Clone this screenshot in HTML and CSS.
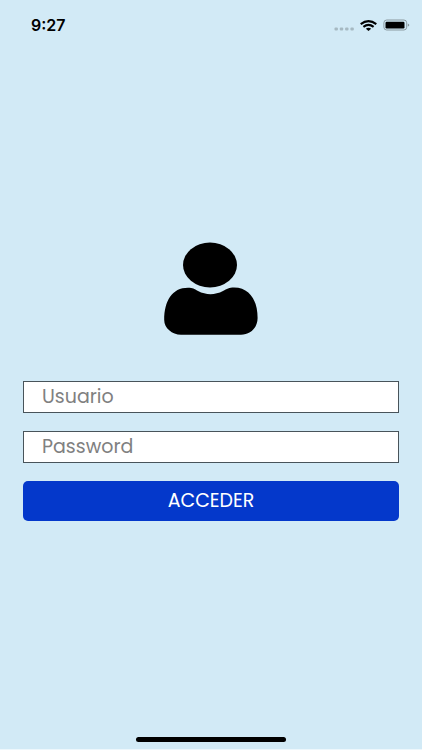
FILE: index.html
```html
<!DOCTYPE html>
<html lang="es">
<head>
<meta charset="utf-8">
<meta name="viewport" content="width=device-width, initial-scale=1">
<title>Acceder</title>
<link rel="stylesheet" href="styles.css">
</head>
<body>
<header class="status">
  <time class="clock">9:27</time>
  <div class="indicators">
    <svg class="signal" width="20" height="4" viewBox="0 0 20 4" aria-hidden="true">
      <rect x="0.5" y="0.5" width="3.4" height="3" rx="1"/><rect x="5.8" y="0.5" width="3.4" height="3" rx="1"/><rect x="11.1" y="0.5" width="3.4" height="3" rx="1"/><rect x="16.4" y="0.5" width="3.4" height="3" rx="1"/>
    </svg>
    <svg class="wifi" width="17" height="11" viewBox="0 0 17 11" aria-hidden="true">
      <path d="M0.7 4.1Q8.5-1.8 16.3 4.1M3.4 6.8Q8.5 2.9 13.6 6.8" fill="none" stroke="#000" stroke-width="2.1"/>
      <path d="M5.8 8.8Q8.5 6.6 11.2 8.8L8.5 10.9Z"/>
    </svg>
    <svg class="battery" width="27" height="12" viewBox="0 0 27 12" aria-hidden="true">
      <rect x="0.9" y="1" width="22.8" height="10" rx="2.8" fill="none" stroke="#8a999f"/>
      <rect x="2.5" y="2.7" width="19" height="6.8" rx="1.2"/>
      <path d="M24.8 4.4Q26.3 5 26.3 6T24.8 7.6Z" fill="#8a999f"/>
    </svg>
  </div>
</header>
<main class="login">
  <svg class="avatar" width="94" height="93" viewBox="0 0 94 93" aria-hidden="true">
    <ellipse cx="46" cy="23" rx="27" ry="22.4"/>
    <path d="M24 45.8C29 45.8 30 46.7 34 49C42 53.2 51 53.2 59 49C63 46.7 65 45.4 70 45.4C86 45.4 93.6 59 93.6 76C93.6 86 86 92.7 77 92.7H17C8 92.7 0.2 86 0.2 78C0.2 59 8 45.8 24 45.8Z"/>
  </svg>
  <form class="form">
    <input class="field" type="text" placeholder="Usuario" aria-label="Usuario">
    <input class="field" type="password" placeholder="Password" aria-label="Password">
    <button class="submit" type="submit">ACCEDER</button>
  </form>
</main>
<footer class="home"><div class="home-bar"></div></footer>
</body>
</html>
```
FILE: styles.css
```css
* {
  box-sizing: border-box;
}

body {
  display: flex;
  flex-direction: column;
  min-height: 100vh;
  margin: 0;
  background: #d2eaf6;
  border-bottom: 1px solid #edf7fc;
  font-family: Poppins, Inter, "Liberation Sans", sans-serif;
}

.status {
  display: flex;
  align-items: center;
  justify-content: space-between;
  height: 50px;
  padding: 0 12px 0 31px;
}

.clock {
  font-family: Inter, "Liberation Sans", sans-serif;
  font-size: 16px;
  font-weight: 600;
  line-height: 20px;
}

.indicators {
  display: flex;
  align-items: center;
  gap: 6px;
}

.signal {
  fill: #a6b9c2;
  margin-top: 7px;
}

.login {
  display: flex;
  flex: 1;
  flex-direction: column;
  align-items: center;
  justify-content: center;
  gap: 46px;
  padding: 0 23px;
}

.form {
  display: flex;
  flex-direction: column;
  gap: 18px;
  width: 100%;
}

.field {
  width: 100%;
  height: 32px;
  padding: 0 18px 2px;
  border: 1px solid #48545a;
  border-radius: 0;
  background: #fff;
  color: #000;
  font: 400 19px/24px Poppins, Inter, "Liberation Sans", sans-serif;
}

.field::placeholder {
  color: #808080;
  opacity: 1;
}

.submit {
  height: 40px;
  padding: 0;
  border: 0;
  border-radius: 5px;
  background: #0438cb;
  color: #fff;
  font: 400 19px/24px Poppins, Inter, "Liberation Sans", sans-serif;
}

.home {
  display: flex;
  justify-content: center;
  padding: 24px 0 7px;
}

.home-bar {
  width: 150px;
  height: 5px;
  border-radius: 3px;
  background: #000;
}
```
